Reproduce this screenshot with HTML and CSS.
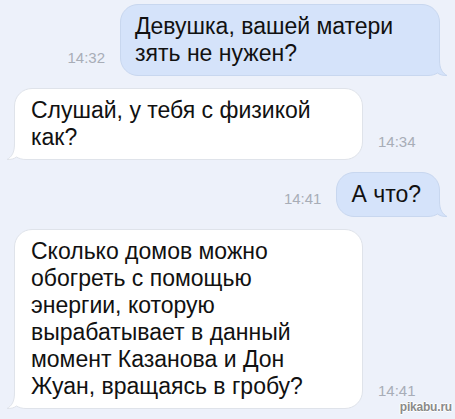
FILE: index.html
```html
<!DOCTYPE html>
<html lang="ru">
<head>
<meta charset="utf-8">
<title>Сообщения</title>
<link rel="stylesheet" href="styles.css">
</head>
<body>
<main class="thread">
  <div class="row row-out">
    <span class="time">14:32</span>
    <div class="bubble bubble-out">Девушка, вашей матери зять не нужен?
      <svg class="tail" width="30" height="26" viewBox="0 0 30 26" aria-hidden="true">
        <path class="tail-fill" d="M0 25.5 L10 25.5 C14 25.5 17 24.5 19.5 23 C22 25 25 25.5 29 25.5 C24.5 23 21.5 19 21.5 10 L21.5 0 L0 0 Z"/>
        <path class="tail-line" d="M0 25.5 L10 25.5 C14 25.5 17 24.5 19.5 23 C22 25 25 25.5 29 25.5 C24.5 23 21.5 19 21.5 10 L21.5 0"/>
      </svg>
    </div>
  </div>

  <div class="row row-in">
    <div class="bubble bubble-in">Слушай, у тебя с физикой как?
      <svg class="tail" width="30" height="26" viewBox="0 0 30 26" aria-hidden="true">
        <path class="tail-fill" d="M0 25.5 L10 25.5 C14 25.5 17 24.5 19.5 23 C22 25 25 25.5 29 25.5 C24.5 23 21.5 19 21.5 10 L21.5 0 L0 0 Z"/>
        <path class="tail-line" d="M0 25.5 L10 25.5 C14 25.5 17 24.5 19.5 23 C22 25 25 25.5 29 25.5 C24.5 23 21.5 19 21.5 10 L21.5 0"/>
      </svg>
    </div>
    <span class="time">14:34</span>
  </div>

  <div class="row row-out">
    <span class="time">14:41</span>
    <div class="bubble bubble-out">А что?
      <svg class="tail" width="30" height="26" viewBox="0 0 30 26" aria-hidden="true">
        <path class="tail-fill" d="M0 25.5 L10 25.5 C14 25.5 17 24.5 19.5 23 C22 25 25 25.5 29 25.5 C24.5 23 21.5 19 21.5 10 L21.5 0 L0 0 Z"/>
        <path class="tail-line" d="M0 25.5 L10 25.5 C14 25.5 17 24.5 19.5 23 C22 25 25 25.5 29 25.5 C24.5 23 21.5 19 21.5 10 L21.5 0"/>
      </svg>
    </div>
  </div>

  <div class="row row-in">
    <div class="bubble bubble-in">Сколько домов можно обогреть с помощью энергии, которую вырабатывает в данный момент Казанова и Дон Жуан, вращаясь в гробу?
      <svg class="tail" width="30" height="26" viewBox="0 0 30 26" aria-hidden="true">
        <path class="tail-fill" d="M0 25.5 L10 25.5 C14 25.5 17 24.5 19.5 23 C22 25 25 25.5 29 25.5 C24.5 23 21.5 19 21.5 10 L21.5 0 L0 0 Z"/>
        <path class="tail-line" d="M0 25.5 L10 25.5 C14 25.5 17 24.5 19.5 23 C22 25 25 25.5 29 25.5 C24.5 23 21.5 19 21.5 10 L21.5 0"/>
      </svg>
    </div>
    <span class="time">14:41</span>
  </div>
</main>
<span class="watermark">pikabu.ru</span>
</body>
</html>
```

FILE: styles.css
```css
html, body {
  margin: 0;
  padding: 0;
}

body {
  width: 455px;
  height: 419px;
  overflow: hidden;
  position: relative;
  background: #edf1fa;
  font-family: "Liberation Sans", Arial, sans-serif;
  color: #111;
}

.thread {
  display: flex;
  flex-direction: column;
  gap: 12px;
  padding: 4px 15px 0 14px;
}

.row {
  display: flex;
  align-items: flex-end;
  gap: 15px;
}

.row-out {
  justify-content: flex-end;
}

.row-in {
  justify-content: flex-start;
}

.time {
  font-size: 15px;
  line-height: 16px;
  color: #a8adb7;
  margin-bottom: 10px;
  white-space: nowrap;
}

/* bubble paints its own stacking context so the tail sits
   above the background but under the text */
.bubble {
  position: relative;
  z-index: 0;
  box-sizing: border-box;
  font-size: 23px;
  line-height: 27px;
  padding: 8px 16px;
  border-radius: 18px;
  border: 1px solid;
}

.bubble-out {
  max-width: 320px;
  padding-left: 14px;
  padding-right: 18px;
  background: #d5e3fa;
  border-color: #c8d7ef;
}

.bubble-in {
  max-width: 349px;
  padding-left: 16px;
  padding-right: 30px;
  background: #ffffff;
  border-color: #dfe3ea;
}

.tail {
  position: absolute;
  z-index: -1;
  bottom: -1px;
  display: block;
}

.bubble-out .tail {
  right: -9px;
}

.bubble-in .tail {
  left: -9px;
  transform: scaleX(-1);
}

.tail-line {
  fill: none;
  stroke-width: 1;
}

.bubble-out .tail-fill {
  fill: #d5e3fa;
}

.bubble-out .tail-line {
  stroke: #c8d7ef;
}

.bubble-in .tail-fill {
  fill: #ffffff;
}

.bubble-in .tail-line {
  stroke: #dfe3ea;
}

.watermark {
  position: absolute;
  right: 3px;
  bottom: 5px;
  font-size: 12px;
  font-weight: bold;
  letter-spacing: -0.2px;
  color: #8a8a8a;
  text-shadow: 0 0 1px #fff, 1px 0 0 #fff, -1px 0 0 #fff, 0 1px 0 #fff, 0 -1px 0 #fff;
}
```
